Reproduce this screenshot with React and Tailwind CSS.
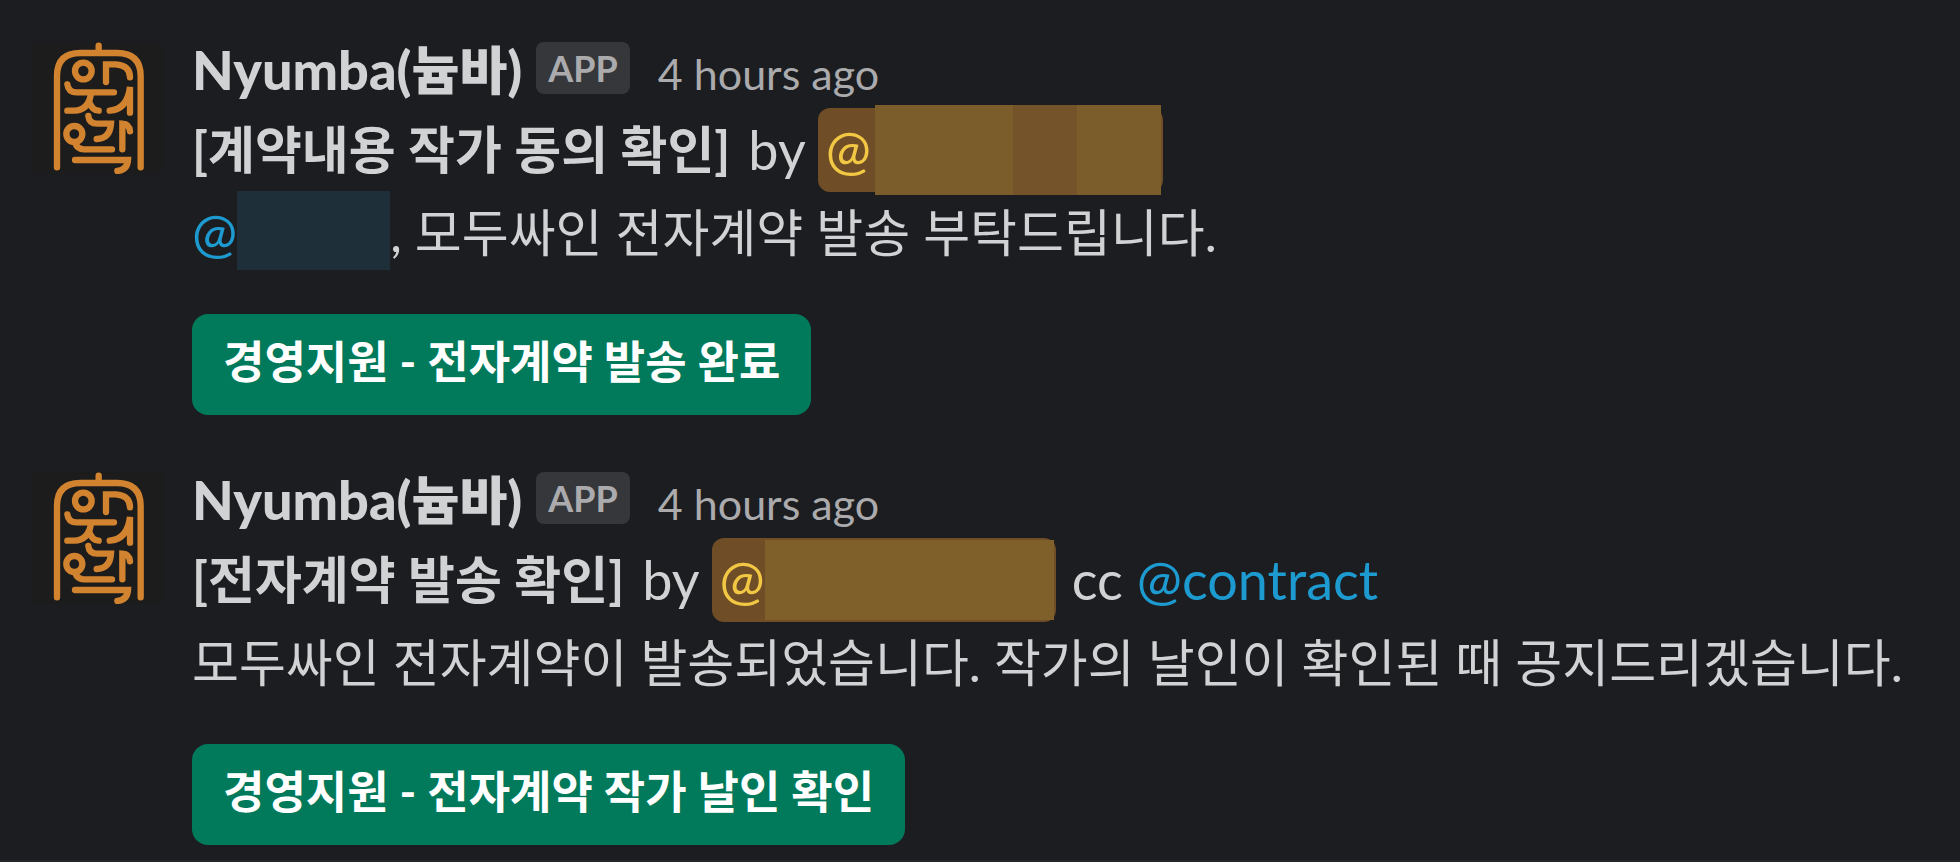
const LATIN_KR = "font-['Lato','Noto_Sans_CJK_KR',sans-serif]";

const AvatarLogo = () => (
  <svg
    viewBox="36 36 396 396"
    className="size-[132px] shrink-0 rounded-lg bg-[#1c1c1c]"
    fill="none"
    stroke="#d2832f"
    strokeWidth="19"
    strokeLinecap="round"
    role="img"
    aria-label="Nyumba"
  >
    <path d="M236 47V68" />
    <path d="M111 412V138Q111 69 181 69H291Q362 69 362 138V412" />
    <circle cx="190" cy="123" r="25" />
    <path d="M258 156V103H287Q330 106 330 142" />
    <path d="M142 163Q145 187 170 187H282" />
    <path d="M142 242H163Q204 240 212 196" />
    <path d="M207 214Q217 242 236 242" />
    <path d="M269 242Q322 238 330 171V248" />
    <path d="M205 258Q207 281 232 281H273Q270 325 230 327" />
    <circle cx="163" cy="312" r="24" />
    <path d="M165 338Q172 358 192 358H276" />
    <path d="M307 358V281Q328 282 330 304" />
    <path d="M165 390H324Q322 420 292 423" />
  </svg>
);

const Message = ({ children, action }) => (
  <article className="flex gap-7">
    <AvatarLogo />
    <div className="min-w-0 flex-1">
      <header className="flex h-[66px] items-baseline">
        <h2 className="text-[54px] leading-[56px] font-black">
          Nyumba(<span className="text-[52px]">늄바</span>)
        </h2>
        <span className="ml-3.5 self-start rounded-lg bg-[#35373b] px-3 text-[36px] leading-[52px] font-bold text-[#ababad]">
          APP
        </span>
        <time className="ml-7 text-[43px] leading-[56px] text-[#ababad]">
          4 hours ago
        </time>
      </header>
      <div className="text-[51px] leading-[83px]">{children}</div>
      <button
        type="button"
        className="mt-10 h-[101px] rounded-2xl bg-[#007a5a] px-[31px] pb-1 text-[45px] font-bold text-white"
      >
        {action}
      </button>
    </div>
  </article>
);

export default function App() {
  return (
    <main
      className={`${LATIN_KR} min-h-screen border-b-2 border-[#26252a] bg-[#1c1d21] pt-[42px] pr-4 pl-8 break-keep text-[#d1d2d3]`}
    >
      <div className="flex flex-col gap-[57px]">
        <Message action="경영지원 - 전자계약 발송 완료">
          <p className="flex h-[83px] items-center">
            <strong>[계약내용 작가 동의 확인]</strong>
            <span className="ml-[18px] text-[54px]">by</span>
            <span className="ml-3 flex h-[84px] items-center rounded-xl bg-[#6f4d26] pr-0.5 pl-2 text-[54px] text-[#f2c744]">
              @
              <span className="ml-1 flex h-[90px] w-[286px] bg-[#7b5c2b]">
                <span className="ml-[138px] w-16 bg-[#74532a]" />
              </span>
            </span>
          </p>
          <p className="flex h-[83px] items-center">
            <a href="#mention" className="text-[54px] text-[#1d9bd1]">
              @
            </a>
            <span className="mb-1 h-[79px] w-[153px] bg-[#1f2f3a]" />, 모두싸인
            전자계약 발송 부탁드립니다.
          </p>
        </Message>
        <Message action="경영지원 - 전자계약 작가 날인 확인">
          <p className="flex h-[83px] items-center">
            <strong>[전자계약 발송 확인]</strong>
            <span className="ml-[18px] text-[54px]">by</span>
            <span className="ml-3 flex h-[84px] items-center rounded-xl bg-[#6f4d26] pr-0.5 pl-2 text-[54px] text-[#f2c744]">
              @
              <span className="h-20 w-[289px] bg-[#7f602b]" />
            </span>
            <span className="ml-4 text-[54px]">cc</span>
            <a href="#contract" className="ml-3.5 text-[54px] text-[#1d9bd1]">
              @contract
            </a>
          </p>
          <p>
            모두싸인 전자계약이 발송되었습니다. 작가의 날인이 확인된 때
            공지드리겠습니다.
          </p>
        </Message>
      </div>
    </main>
  );
}
